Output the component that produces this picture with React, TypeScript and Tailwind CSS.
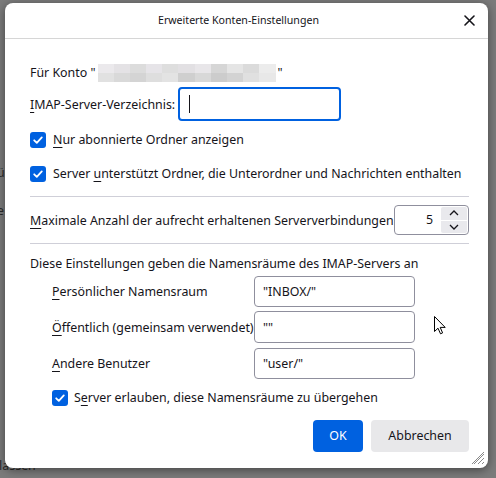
import type { ReactNode } from 'react'

/* ─── Small parts ─────────────────────────────────────────────────────────── */

function Check() {
  return (
    <span className="flex h-4 w-4 shrink-0 items-center justify-center rounded-[3px] bg-[#0061e0]">
      <svg width="12" height="12" viewBox="0 0 12 12" fill="none">
        <path d="M2.2 6.3 4.8 8.8 9.8 3.4" stroke="white" strokeWidth="1.8" strokeLinecap="round" strokeLinejoin="round" />
      </svg>
    </span>
  )
}

function Key({ children }: { children: ReactNode }) {
  return <span className="underline decoration-1 underline-offset-[3px]">{children}</span>
}

function NsInput({ value }: { value: string }) {
  return (
    <div className="flex h-full w-[161px] items-center rounded-[4px] border border-[#8f8f9d] pl-[8px] pt-[2px] text-[#15141a]">
      {value}
    </div>
  )
}

const BLUR_TOP = ['bg-[#ebe9ec]', 'bg-[#e4e2e5]', 'bg-[#dcdcdc]', 'bg-[#e6e4e8]', 'bg-[#dedede]', 'bg-[#e2e0e3]', 'bg-[#e8e6e9]', 'bg-[#d6d6d6]', 'bg-[#e5e5e5]', 'bg-[#dbdbdb]', 'bg-[#ececec]']
const BLUR_BOT = ['bg-[#e1e1e1]', 'bg-[#d9d9d9]', 'bg-[#d4d4d4]', 'bg-[#dedede]', 'bg-[#e3e3e3]', 'bg-[#cfcfcf]', 'bg-[#d8d8d8]', 'bg-[#cccccc]', 'bg-[#d3d3d3]', 'bg-[#e0e0e0]', 'bg-[#e8e8e8]']

/* ─── Dialog ──────────────────────────────────────────────────────────────── */

export default function App() {
  return (
    <div
      className="relative h-[478px] w-[496px] overflow-hidden bg-[#7b7b7b] pl-[5px] pt-[3px] text-[12.4px] text-[#15141a]"
      style={{ fontFamily: '"Noto Sans", "Open Sans", sans-serif' }}
    >
      {/* bits of the window behind */}
      <span className="absolute left-[-3px] top-[164px] text-[#2a2a2a]">ü</span>
      <span className="absolute left-[-3px] top-[202px] text-[#2a2a2a]">e</span>
      <span className="absolute left-[-6px] top-[457px] text-[#2a2a2a]">rlassen</span>

      <div className="relative flex h-[465px] w-[483px] flex-col rounded-[8px] bg-white shadow-[0_2px_10px_rgba(0,0,0,0.45)]">
        {/* header */}
        <div className="flex h-[36px] items-center border-b border-[#d6d6d6]">
          <div className="flex-1 pl-[8px] pt-[1px] text-center text-[10.6px]">Erweiterte Konten-Einstellungen</div>
          <svg className="mr-[13px]" width="11" height="11" viewBox="0 0 11 11">
            <path d="M1 1 10 10M10 1 1 10" stroke="#15141a" strokeWidth="1.6" strokeLinecap="round" />
          </svg>
        </div>

        <div className="flex flex-col pl-[25px] pr-[19px]">
          {/* account */}
          <div className="mt-[24px] flex h-[20px] items-center">
            <span className="pt-[1px]">Für Konto "</span>
            <div className="mx-[2px] flex w-[178px] flex-col">
              <div className="flex h-[9px]">
                {BLUR_TOP.map((c, i) => <div key={i} className={`h-full flex-1 ${c}`} />)}
              </div>
              <div className="flex h-[9px]">
                {BLUR_BOT.map((c, i) => <div key={i} className={`h-full flex-1 ${c}`} />)}
              </div>
            </div>
            <span className="pt-[1px]">"</span>
          </div>

          {/* imap dir */}
          <div className="mt-[4px] flex h-[34px] items-center gap-[3px]">
            <span className="pt-[2px]"><Key>I</Key>MAP-Server-Verzeichnis:</span>
            <div className="flex h-full w-[163px] items-center rounded-[4px] border-2 border-[#0061e0] pl-[9px]">
              <span className="h-[18px] w-px bg-[#15141a]" />
            </div>
          </div>

          <label className="mt-[9px] flex h-[20px] items-center gap-[7px]">
            <Check />
            <span className="pt-[1px]"><Key>N</Key>ur abonnierte Ordner anzeigen</span>
          </label>

          <label className="mt-[14px] flex h-[20px] items-center gap-[7px] whitespace-nowrap">
            <Check />
            <span className="pt-[1px]">Server <Key>u</Key>nterstützt Ordner, die Unterordner und Nachrichten enthalten</span>
          </label>

          <div className="mt-[12px] h-px bg-[#cfcfd8]" />

          {/* connections */}
          <div className="mt-[8px] flex h-[30px] items-center justify-between whitespace-nowrap">
            <span className="pt-[2px]"><Key>M</Key>aximale Anzahl der aufrecht erhaltenen Serververbindungen</span>
            <div className="flex h-full w-[75px] items-center rounded-[4px] border border-[#8f8f9d] pr-[1px]">
              <span className="flex-1 pr-[8px] pt-[1px] text-right">5</span>
              <div className="flex h-[26px] w-[26px] flex-col gap-px">
                <div className="flex flex-1 items-center justify-center rounded-t-[2px] bg-[#e9e9ed]">
                  <svg width="10" height="6" viewBox="0 0 10 6"><path d="M1 5 5 1 9 5" stroke="#15141a" strokeWidth="1.3" fill="none" /></svg>
                </div>
                <div className="flex flex-1 items-center justify-center rounded-b-[2px] bg-[#e9e9ed]">
                  <svg width="10" height="6" viewBox="0 0 10 6"><path d="M1 1 5 5 9 1" stroke="#15141a" strokeWidth="1.3" fill="none" /></svg>
                </div>
              </div>
            </div>
          </div>

          <div className="mt-[8px] h-px bg-[#cfcfd8]" />

          <div className="mt-[9px] flex h-[20px] items-center pt-[2px]">Diese Einstellungen geben die Namensräume des IMAP-Servers an</div>

          {/* namespaces */}
          <div className="pl-[22px]">
            <div className="mt-[3px] flex h-[31px] items-center">
              <span className="w-[202px] pt-[2px]"><Key>P</Key>ersönlicher Namensraum</span>
              <NsInput value={'"INBOX/"'} />
            </div>
            <div className="mt-[4px] flex h-[32px] items-center">
              <span className="w-[202px] whitespace-nowrap pt-[2px]"><Key>Ö</Key>ffentlich (gemeinsam verwendet)</span>
              <NsInput value={'""'} />
            </div>
            <div className="mt-[5px] flex h-[31px] items-center">
              <span className="w-[202px] pt-[2px]"><Key>A</Key>ndere Benutzer</span>
              <NsInput value={'"user/"'} />
            </div>
            <label className="mt-[9px] flex h-[20px] items-center gap-[6px]">
              <Check />
              <span className="pt-[1px]">S<Key>e</Key>rver erlauben, diese Namensräume zu übergehen</span>
            </label>
          </div>

          {/* buttons */}
          <div className="mt-[12px] flex justify-end gap-[8px]">
            <button className="h-[32px] w-[50px] rounded-[4px] bg-[#0061e0] pt-[1px] text-white">OK</button>
            <button className="h-[32px] w-[98px] rounded-[4px] bg-[#e8e8ea] pt-[1px] text-[#15141a]">Abbrechen</button>
          </div>
        </div>

        {/* resize grip */}
        <svg className="absolute bottom-[3px] right-[3px]" width="14" height="14" viewBox="0 0 14 14">
          <path d="M13 3 3 13M13 7 7 13M13 11 11 13M13 1 1 13" stroke="#8a8a8a" strokeWidth="1" />
        </svg>

        {/* mouse pointer */}
        <svg className="absolute left-[429px] top-[313px]" width="12" height="19" viewBox="0 0 12 19">
          <path d="M0.5 0.5V15.5L4 12.2 6.5 17.8 8.6 16.9 6.2 11.4H11.2Z" fill="white" stroke="black" strokeWidth="1" strokeLinejoin="round" />
        </svg>
      </div>
    </div>
  )
}
